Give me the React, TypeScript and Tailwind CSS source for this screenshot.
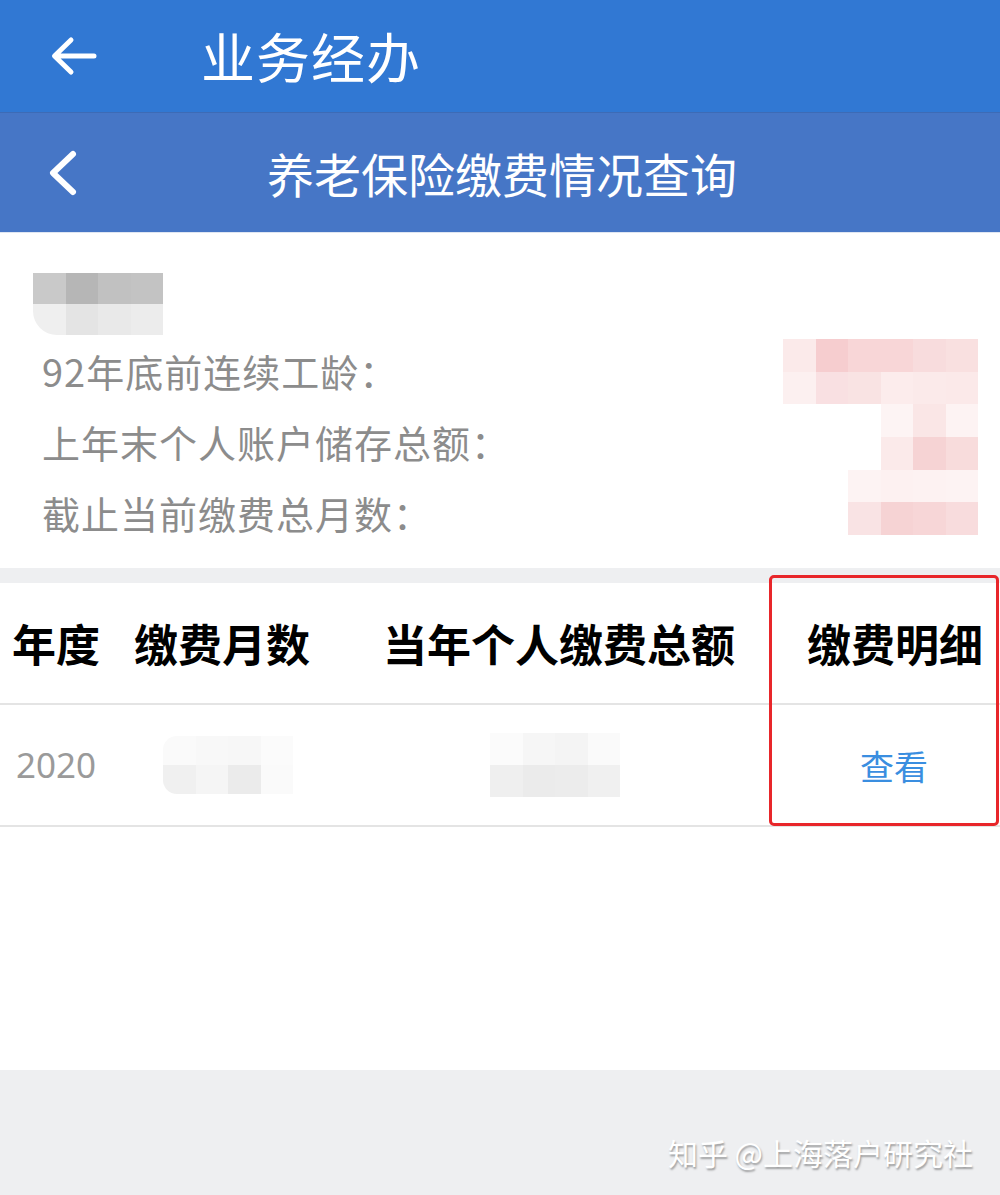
import React from 'react'

const pink: string[][] = [
  ['#fbeaea', '#f6cdcf', '#f8d6d7', '#f8d6d7', '#f8dcdd', '#f9e0e0'],
  ['#fcf0f0', '#f9e0e2', '#f9e3e3', '#fcecec', '#fbeaea', '#fbe9e9'],
  ['', '', '', '#fdf4f4', '#fae6e6', '#fdf3f3'],
  ['', '', '', '#fbeaea', '#f6d3d4', '#f8dcdc'],
  ['', '', '#fdf3f3', '#fdf1f1', '#fdf2f2', '#fdf3f3'],
  ['', '', '#f9e3e4', '#f6d3d4', '#f7d6d7', '#f8dcdd'],
]

const nameBlur: string[][] = [
  ['#c9c9c9', '#b6b6b6', '#c1c1c1', '#c3c3c3'],
  ['#efefef', '#e4e4e4', '#e9e9e9', '#ececec'],
]

function Mosaic({ cells, cell, className }: { cells: string[][]; cell: string; className?: string }) {
  return (
    <div className={className}>
      {cells.map((row, i) => (
        <div key={i} className="flex">
          {row.map((c, j) => (
            <div key={j} className={cell} style={{ backgroundColor: c || 'transparent' }} />
          ))}
        </div>
      ))}
    </div>
  )
}

export default function App() {
  const font = { fontFamily: '"Noto Sans CJK SC", "Noto Sans", sans-serif' }

  return (
    <div className="w-[1000px] h-[1195px] bg-white flex flex-col" style={font}>
      {/* top app bar */}
      <div className="h-[112px] bg-[#3178d3] flex items-center shrink-0">
        <svg className="ml-[50px]" width="47" height="40" viewBox="0 0 47 40" fill="none">
          <path d="M44 20H5 M21 4 L4.5 20 L21 36" stroke="white" strokeWidth="5" strokeLinecap="round" strokeLinejoin="round" />
        </svg>
        <span className="ml-[104px] text-white text-[54px] leading-none tracking-[1px]">业务经办</span>
      </div>

      {/* page header */}
      <div className="h-[121px] bg-[#4676c6] relative flex items-center justify-center shrink-0 border-t border-[#3d6bb6] border-b border-b-[#dfe6f2]">
        <svg className="absolute left-[46px] top-[36px]" width="32" height="48" viewBox="0 0 32 48" fill="none">
          <path d="M27 5 L7 24 L27 43" stroke="white" strokeWidth="6" strokeLinecap="round" strokeLinejoin="round" />
        </svg>
        <span className="text-white text-[47px] leading-none pl-[4px]">养老保险缴费情况查询</span>
      </div>

      {/* account info */}
      <div className="h-[335px] flex shrink-0">
        <div className="pl-[33px] pt-[40px]">
          <Mosaic cells={nameBlur} cell="w-[32.5px] h-[31px]" className="rounded-bl-[24px] overflow-hidden" />
          <div className="pl-[9px] text-[38px] tracking-[1px] text-[#8c8c8c] leading-[71px]">
            <div>92年底前连续工龄：</div>
            <div>上年末个人账户储存总额：</div>
            <div>截止当前缴费总月数：</div>
          </div>
        </div>
        <Mosaic cells={pink} cell="w-[32.5px] h-[32.7px]" className="ml-auto mr-[22px] mt-[106px]" />
      </div>

      {/* table */}
      <div className="relative shrink-0">
        <div className="h-[15px] bg-[#eeeff1]" />
        <div className="h-[122px] grid grid-cols-[120px_250px_400px_230px] items-center text-[44px] font-bold text-black border-b-2 border-[#e4e4e4]">
          <div className="pl-[12px]">年度</div>
          <div className="pl-[14px]">缴费月数</div>
          <div className="pl-[13px]">当年个人缴费总额</div>
          <div className="text-center pl-[20px]">缴费明细</div>
        </div>
        <div className="h-[122px] grid grid-cols-[120px_250px_400px_230px] items-center border-b-2 border-[#e4e4e4]">
          <div className="pl-[16px] text-[35px] text-[#9a9a9a]" style={{ fontFamily: '"Noto Sans", "Noto Sans CJK SC", sans-serif' }}>2020</div>
          <div className="pl-[43px]">
            <Mosaic
              cells={[
                ['#fafafa', '#f8f8f8', '#f7f7f7', '#fbfbfb'],
                ['#f0f0f0', '#f5f5f5', '#ebebeb', '#fafafa'],
              ]}
              cell="w-[32.5px] h-[29px]"
              className="rounded-l-[14px] overflow-hidden"
            />
          </div>
          <div className="pl-[120px]">
            <Mosaic
              cells={[
                ['#fbfbfb', '#f6f6f6', '#f4f4f4', '#fafafa'],
                ['#efefef', '#ebebeb', '#ececec', '#f0f0f0'],
              ]}
              cell="w-[32.5px] h-[32px]"
              className="rounded-tr-[18px] overflow-hidden"
            />
          </div>
          <div className="text-center pl-[18px] text-[34px] text-[#3a8ee0]">查看</div>
        </div>
        <div className="absolute left-[769px] top-[7px] w-[230px] h-[251px] border-[3px] border-[#e8262a] rounded-[5px]" />
      </div>

      <div className="flex-1" />

      {/* footer */}
      <div className="h-[125px] bg-[#eeeff1] flex justify-end items-center pr-[27px] pt-[38px] shrink-0">
        <span className="text-[30px] text-white leading-none" style={{ textShadow: '1px 2px 2px rgba(0,0,0,0.35)' }}>
          知乎 @上海落户研究社
        </span>
      </div>
    </div>
  )
}
